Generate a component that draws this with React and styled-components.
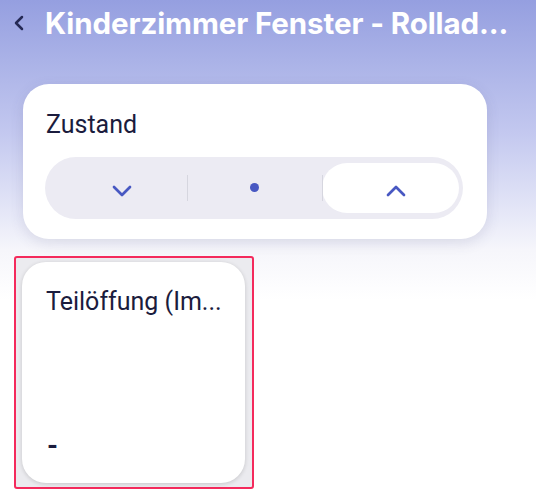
import React from "react";
import styled, { createGlobalStyle } from "styled-components";

const Global = createGlobalStyle`
  html, body { margin: 0; padding: 0; }
  body { font-family: Roboto, "Noto Sans", sans-serif; }
  * { box-sizing: border-box; }
`;

const Page = styled.div`
  width: 536px;
  height: 500px;
  overflow: hidden;
  background: linear-gradient(180deg, #959fe0 0px, #aab2e7 60px, #c2c7ef 130px, #e4e6f7 210px, #f6f6fb 250px, #ffffff 300px);
  display: flex;
  flex-direction: column;
`;

const Header = styled.header`
  display: flex;
  align-items: center;
  height: 46px;
  padding: 0 0 0 12px;
  gap: 20px;
`;

const BackButton = styled.button`
  border: 0;
  background: none;
  padding: 0;
  width: 13px;
  height: 18px;
  display: flex;
  align-items: center;
  justify-content: center;
  color: #252a55;
`;

const Title = styled.h1`
  margin: 0;
  font-family: Inter, "Noto Sans", sans-serif;
  font-weight: 700;
  font-size: 29.5px;
  line-height: 36px;
  color: #ffffff;
  white-space: nowrap;
  letter-spacing: -0.1px;
`;

const Content = styled.main`
  display: flex;
  flex-direction: column;
  padding: 38px 0 0 0;
`;

const StateCard = styled.section`
  margin-left: 23px;
  width: 464px;
  background: #ffffff;
  border-radius: 26px;
  box-shadow: 0 4px 14px rgba(70, 70, 120, 0.14);
  padding: 26px 24px 20px 22px;
  display: flex;
  flex-direction: column;
  gap: 17px;
`;

const Label = styled.div`
  font-family: Roboto, sans-serif;
  font-size: 25px;
  line-height: 30px;
  color: #1b1c3d;
  padding-left: ${(p) => p.$indent || 0}px;
  white-space: nowrap;
`;

const Segmented = styled.div`
  height: 62px;
  border-radius: 31px;
  background: #ecebf3;
  padding: 6px 4px;
  display: grid;
  grid-template-columns: 1fr 1fr 1fr;
`;

const Segment = styled.button`
  position: relative;
  border: 0;
  padding: 0;
  height: 50px;
  border-radius: 25px;
  background: ${(p) => (p.$active ? "#ffffff" : "transparent")};
  display: flex;
  align-items: center;
  justify-content: center;
  color: #4858c2;
  &::before {
    content: "";
    display: ${(p) => (p.$divider ? "block" : "none")};
    position: absolute;
    left: ${(p) => (p.$active ? "0" : "1px")};
    top: 12px;
    width: 1px;
    height: 26px;
    background: #d6d6df;
  }
`;

const IconWrap = styled.span`
  display: flex;
  transform: translate(${(p) => p.$dx || 0}px, ${(p) => p.$dy || 0}px);
`;

const Dot = styled.span`
  width: 9px;
  height: 9px;
  border-radius: 50%;
  background: #4858c2;
`;

const Highlight = styled.div`
  margin: 17px 0 0 14px;
  width: 240px;
  height: 233px;
  border: 2px solid #f42a5c;
  border-radius: 3px;
  background: #ebebef;
  padding: 4px 7px 4px 6px;
  display: flex;
`;

const TileCard = styled.section`
  flex: 1;
  background: #ffffff;
  border-radius: 24px;
  box-shadow: 0 1px 4px rgba(0, 0, 0, 0.16);
  padding: 25px 20px 22px 24px;
  display: flex;
  flex-direction: column;
  justify-content: space-between;
`;

const Value = styled.div`
  font-family: Roboto, sans-serif;
  font-weight: 700;
  font-size: 28px;
  line-height: 30px;
  color: #1b1c3d;
  padding-left: 1px;
`;

const Chevron = ({ dir }) => (
  <svg width="20" height="12" viewBox="0 0 20 12" fill="none">
    <path
      d={dir === "down" ? "M2 2 L10 10 L18 2" : "M2 10 L10 2 L18 10"}
      stroke="currentColor"
      strokeWidth="2.7"
      strokeLinecap="round"
      strokeLinejoin="round"
    />
  </svg>
);

export default function App() {
  return (
    <>
      <Global />
      <Page>
        <Header>
          <BackButton aria-label="Zurück">
            <svg width="13" height="18" viewBox="0 0 13 18" fill="none">
              <path d="M10 3 L4 9 L10 15" stroke="currentColor" strokeWidth="2.5" strokeLinecap="round" strokeLinejoin="round" />
            </svg>
          </BackButton>
          <Title>Kinderzimmer Fenster - Rollad...</Title>
        </Header>
        <Content>
          <StateCard>
            <Label $indent={1}>Zustand</Label>
            <Segmented>
              <Segment aria-label="Runter">
                <IconWrap $dx={5} $dy={3}>
                  <Chevron dir="down" />
                </IconWrap>
              </Segment>
              <Segment $divider aria-label="Stopp">
                <IconWrap $dx={1} $dy={-1}>
                  <Dot />
                </IconWrap>
              </Segment>
              <Segment $divider $active aria-label="Hoch">
                <IconWrap $dx={5} $dy={3}>
                  <Chevron dir="up" />
                </IconWrap>
              </Segment>
            </Segmented>
          </StateCard>
          <Highlight>
            <TileCard>
              <Label>Teilöffung (Im...</Label>
              <Value>-</Value>
            </TileCard>
          </Highlight>
        </Content>
      </Page>
    </>
  );
}
